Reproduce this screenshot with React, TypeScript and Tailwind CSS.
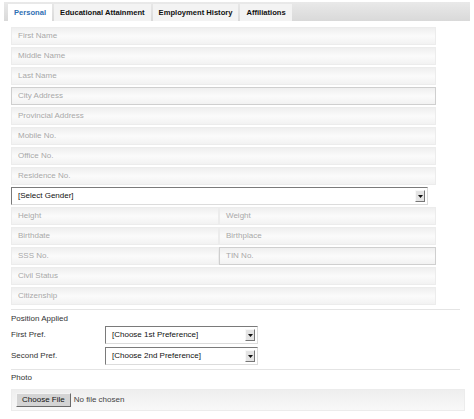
import type { ReactNode } from "react";

const tabs = ["Personal", "Educational Attainment", "Employment History", "Affiliations"];

const Field = ({ label, className = "", strong = false }: { label: string; className?: string; strong?: boolean }) => (
    <div
        className={`h-[18px] flex items-center pl-[6px] text-[8px] text-[#a8a8a8] bg-gradient-to-b from-[#efefef] via-[#fbfbfb] to-[#f2f2f2] border ${
            strong ? "border-[#cfcfcf]" : "border-[#ececec]"
        } ${className}`}
    >
        {label}
    </div>
);

const Arrow = () => (
    <div className="w-[10px] h-[12px] bg-[#e4e4e4] border border-t-[#f8f8f8] border-l-[#f8f8f8] border-r-[#777] border-b-[#777] flex items-center justify-center">
        <svg width="5" height="3" viewBox="0 0 5 3">
            <path d="M0 0h5L2.5 3z" fill="#111" />
        </svg>
    </div>
);

const Select = ({ children, className = "" }: { children: ReactNode; className?: string }) => (
    <div
        className={`h-[18px] flex items-center justify-between pl-[6px] pr-[2px] bg-white border border-t-[#7a7a7a] border-l-[#7a7a7a] border-r-[#dcdcdc] border-b-[#dcdcdc] text-[8px] text-[#111] ${className}`}
    >
        <span>{children}</span>
        <Arrow />
    </div>
);

export default function App() {
    return (
        <div className="w-[474px] h-[419px] bg-white overflow-hidden font-['Liberation_Sans',Arial,sans-serif]">
            <div className="mx-[4px] mt-[2px] h-[19px] flex items-end gap-[2px] pl-[4px] bg-gradient-to-b from-[#e9e9e9] to-[#d9d9d9]">
                {tabs.map((t, i) => (
                    <div
                        key={t}
                        className={`h-[17px] px-[6px] flex items-center text-[7.6px] font-bold ${
                            i === 0 ? "bg-white text-[#2f6fb3]" : "bg-[#f3f3f3] text-[#111]"
                        }`}
                    >
                        {t}
                    </div>
                ))}
            </div>

            <div className="pl-[11px] pt-[6px] w-[436px] flex flex-col gap-[2px]">
                <Field label="First Name" />
                <Field label="Middle Name" />
                <Field label="Last Name" />
                <Field label="City Address" strong />
                <Field label="Provincial Address" />
                <Field label="Mobile No." />
                <Field label="Office No." />
                <Field label="Residence No." />
                <Select className="w-[417px]">[Select Gender]</Select>
                <div className="grid grid-cols-[208px_1fr]">
                    <Field label="Height" />
                    <Field label="Weight" />
                </div>
                <div className="grid grid-cols-[208px_1fr]">
                    <Field label="Birthdate" />
                    <Field label="Birthplace" />
                </div>
                <div className="grid grid-cols-[208px_1fr]">
                    <Field label="SSS No." />
                    <Field label="TIN No." strong />
                </div>
                <Field label="Civil Status" />
                <Field label="Citizenship" />
            </div>

            <div className="ml-[11px] w-[449px] mt-[4px] border-t border-[#e4e4e4]" />

            <div className="pl-[11px] text-[8px] text-[#333]">
                <div className="h-[13px] mt-[2px] flex items-center">Position Applied</div>
                <div className="flex items-center mt-[1px]">
                    <span className="w-[94px]">First Pref.</span>
                    <Select className="w-[153px]">[Choose 1st Preference]</Select>
                </div>
                <div className="flex items-center mt-[3px]">
                    <span className="w-[94px]">Second Pref.</span>
                    <Select className="w-[153px]">[Choose 2nd Preference]</Select>
                </div>
            </div>

            <div className="ml-[11px] w-[449px] mt-[4px] border-t border-[#e4e4e4]" />

            <div className="pl-[11px] text-[8px] text-[#333]">
                <div className="h-[13px] mt-[1px] flex items-center">Photo</div>
                <div className="mt-[5px] w-[454px] h-[22px] flex items-center pl-[4px] gap-[3px] bg-gradient-to-b from-[#eeeeee] to-[#f8f8f8] border border-[#ececec]">
                    <div className="h-[14px] px-[5px] flex items-center bg-[#d4d4d4] border border-t-[#f4f4f4] border-l-[#f4f4f4] border-r-[#6a6a6a] border-b-[#6a6a6a] text-[#111]">
                        Choose File
                    </div>
                    <span className="text-[#444]">No file chosen</span>
                </div>
            </div>
        </div>
    );
}
